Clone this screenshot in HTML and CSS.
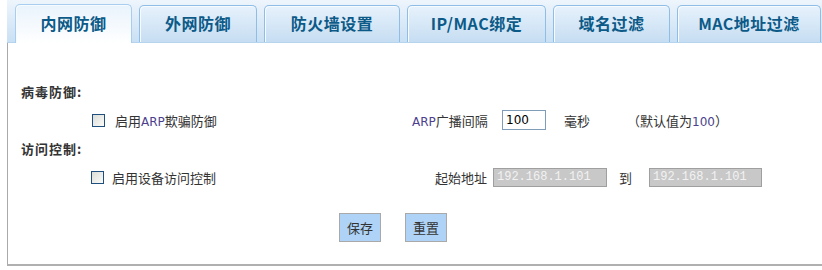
FILE: index.html
```html
<!DOCTYPE html>
<html lang="zh-CN">
<head>
    <meta charset="UTF-8">
    <title>内网防御</title>
    <link rel="stylesheet" href="styles.css">
</head>
<body>

<div class="tabbar">
    <div class="tab active t1">内网防御</div>
    <div class="tab t2">外网防御</div>
    <div class="tab t3">防火墙设置</div>
    <div class="tab t4">IP/MAC绑定</div>
    <div class="tab t5">域名过滤</div>
    <div class="tab t6">MAC地址过滤</div>
</div>

<div class="content">
    <div class="section-title">病毒防御:</div>
    <div class="row">
        <div class="opt">
            <span class="check"></span>
            <span>启用<span class="latin">ARP</span>欺骗防御</span>
        </div>
        <div class="field-label"><span class="latin">ARP</span>广播间隔</div>
        <input type="text" class="num-input" value="100">
        <span class="unit">毫秒</span>
        <span class="hint">（默认值为<span class="latin">100</span>）</span>
    </div>

    <div class="section-title second">访问控制:</div>
    <div class="row">
        <div class="opt opt2">
            <span class="check"></span>
            <span>启用设备访问控制</span>
        </div>
        <div class="field-label">起始地址</div>
        <input type="text" class="ip-input" value="192.168.1.101" disabled>
        <span class="to">到</span>
        <input type="text" class="ip-input ip-end" value="192.168.1.101" disabled>
    </div>

    <div class="actions">
        <button class="btn">保存</button>
        <button class="btn">重置</button>
    </div>
</div>

</body>
</html>
```

FILE: styles.css
```css
body {
    margin: 0;
    font-family: "Noto Sans CJK SC", sans-serif;
    font-size: 13px;
    color: #333;
    background-color: #fff;
}

/* tab strip */
.tabbar {
    margin-left: 7px;
    height: 43px;
    padding-left: 8px;
    box-sizing: border-box;
    display: flex;
    align-items: flex-end;
    gap: 7px;
    background: linear-gradient(#eef5fc, #c9e0f4);
    border-bottom: 1px solid #b5d5ef;
}

.tab {
    height: 37px;
    box-sizing: border-box;
    border: 1px solid #8fbde5;
    border-bottom: none;
    border-radius: 5px 5px 0 0;
    background: linear-gradient(#e7f2fc, #c6ddf2);
    box-shadow: inset 1px 1px 0 #f6fbff;
    display: flex;
    align-items: center;
    justify-content: center;
    padding-bottom: 3px;
    font-size: 16px;
    font-weight: bold;
    letter-spacing: 0.5px;
    color: #0b5a88;
}

.tab.active {
    height: 39px;
    margin-bottom: -1px;
    background: linear-gradient(#e9f3fc, #ffffff);
    border-color: #a9cdee;
}

.t1 { width: 117px; }
.t2 { width: 118px; }
.t3 { width: 136px; }
.t4 { width: 139px; }
.t5 { width: 117px; }
.t6 { width: 144px; }

/* panel */
.content {
    margin-left: 7px;
    height: 223px;
    box-sizing: border-box;
    border-left: 1px solid #aaa;
    border-bottom: 2px solid #b0b0b0;
    padding: 39px 0 0 13px;
}

.section-title {
    height: 20px;
    line-height: 20px;
    font-size: 13px;
    font-weight: bold;
    letter-spacing: 1px;
}

.section-title.second {
    margin-top: 7px;
}

.row {
    display: flex;
    align-items: center;
    height: 24px;
    margin-top: 6px;
    padding-left: 71px;
}

.opt {
    width: 320px;
    display: flex;
    align-items: center;
}

.opt2 {
    margin-left: -1px;
    width: 321px;
}

.opt2 .check {
    margin-right: 8px;
}

.check {
    width: 11px;
    height: 11px;
    border: 1px solid #1f4f7f;
    background: linear-gradient(135deg, #dcdcd7, #fbfbf9);
    margin-right: 10px;
}

.latin {
    font-family: "DejaVu Sans", sans-serif;
    font-size: 12px;
    color: #4b3f8e;
}

.field-label {
    width: 75px;
    text-align: right;
    white-space: nowrap;
}

.num-input {
    width: 44px;
    height: 20px;
    box-sizing: border-box;
    margin-left: 15px;
    border: 1px solid #7f9db9;
    padding: 0 3px;
    font-family: "DejaVu Sans", sans-serif;
    font-size: 12px;
    color: #000;
}

.unit {
    margin-left: 18px;
}

.hint {
    margin-left: 37px;
}

.ip-input {
    width: 114px;
    height: 19px;
    box-sizing: border-box;
    margin-left: 6px;
    border: 1px solid #9f9f9f;
    background-color: #c8c8c8;
    padding: 0 3px;
    font-family: "Liberation Mono", monospace;
    font-size: 12px;
    color: #f2f2f2;
}

.to {
    margin-left: 12px;
}

.ip-end {
    margin-left: 17px;
    width: 113px;
}

/* buttons */
.actions {
    display: flex;
    gap: 24px;
    margin-top: 24px;
    padding-left: 318px;
}

.btn {
    width: 42px;
    height: 29px;
    border: 1px solid #a9a9a9;
    background-color: #afd3f7;
    font-family: "Noto Sans CJK SC", sans-serif;
    font-size: 13px;
    color: #333;
    padding: 0;
}
```
